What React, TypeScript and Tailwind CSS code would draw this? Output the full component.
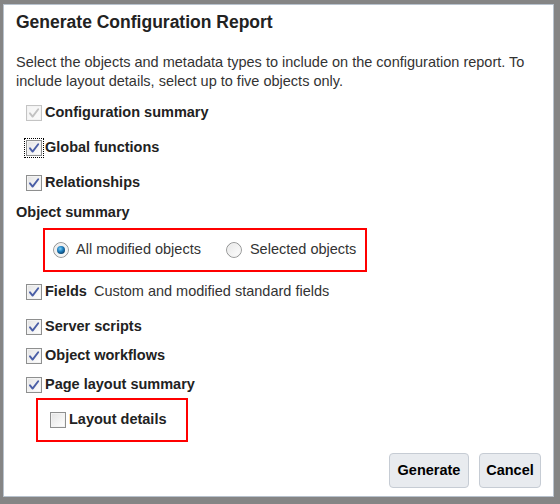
import React from 'react';

const font = { fontFamily: '"Liberation Sans", Arial, sans-serif' };

function Checkbox({ checked = true, disabled = false }: { checked?: boolean; disabled?: boolean }) {
  const border = disabled ? '#c4c4c4' : '#8e8f8f';
  const tick = disabled ? '#c2c2c2' : '#4a5ea6';
  return (
    <svg width="16" height="16" viewBox="0 0 16 16" className="shrink-0">
      <defs>
        <linearGradient id={disabled ? 'cbd' : 'cb'} x1="0" y1="0" x2="1" y2="1">
          <stop offset="0" stopColor={disabled ? '#f4f4f4' : '#e4e4e4'} />
          <stop offset="1" stopColor={disabled ? '#fafafa' : '#ffffff'} />
        </linearGradient>
      </defs>
      <rect x="0.5" y="0.5" width="15" height="15" fill="#fff" stroke={border} />
      <rect x="1.5" y="1.5" width="13" height="13" fill={`url(#${disabled ? 'cbd' : 'cb'})`} stroke="#f3f3f3" />
      {checked && (
        <path d="M4 8.3 L6.6 11.6 L12.2 4.2" fill="none" stroke={tick} strokeWidth="1.9" strokeLinecap="round" strokeLinejoin="round" />
      )}
    </svg>
  );
}

function Radio({ checked = false }: { checked?: boolean }) {
  return (
    <svg width="16" height="16" viewBox="0 0 16 16" className="shrink-0">
      <defs>
        <linearGradient id="rb" x1="0" y1="0" x2="1" y2="1">
          <stop offset="0" stopColor="#e6e6e6" />
          <stop offset="1" stopColor="#ffffff" />
        </linearGradient>
        <radialGradient id="rdot" cx="0.4" cy="0.35" r="0.7">
          <stop offset="0" stopColor="#7fd0f4" />
          <stop offset="0.5" stopColor="#1f7fc0" />
          <stop offset="1" stopColor="#0b3e66" />
        </radialGradient>
      </defs>
      <circle cx="8" cy="8" r="7.4" fill="url(#rb)" stroke="#8f9090" />
      <circle cx="8" cy="8" r="6.3" fill="none" stroke="#f2f2f2" />
      {checked && <circle cx="8" cy="8" r="4" fill="url(#rdot)" />}
    </svg>
  );
}

function CheckRow({ label, className = '', disabled = false, focus = false, children }: { label: string; className?: string; disabled?: boolean; focus?: boolean; children?: React.ReactNode }) {
  return (
    <div className={`flex h-[24px] items-center pl-[22px] ${className}`}>
      <span className={`flex h-[18px] w-[18px] items-center justify-center -ml-px ${focus ? 'outline-1 outline-dotted outline-black' : ''}`}>
        <Checkbox disabled={disabled} />
      </span>
      <span className="ml-[2px] text-[14.5px] font-bold text-[#222]">{label}</span>
      {children}
    </div>
  );
}

export default function App() {
  return (
    <div className="h-[504px] w-[560px] bg-[#858585] pl-[3px] pt-[4px]" style={font}>
      <div className="flex h-[493px] w-[551px] flex-col border border-[#b8c2cd] bg-white">
        <div className="flex h-[35px] items-center pl-[12px] text-[17.5px] font-bold text-[#222]">
          Generate Configuration Report
        </div>
        <p className="mt-[13px] pl-[12px] pr-[14px] text-[14.5px] leading-[19px] text-[#333]">
          Select the objects and metadata types to include on the configuration report. To include layout details, select up to five objects only.
        </p>
        <CheckRow label="Configuration summary" disabled className="mt-[10px]" />
        <CheckRow label="Global functions" focus className="mt-[11px]" />
        <CheckRow label="Relationships" className="mt-[11px]" />
        <div className="mt-[6px] flex h-[24px] items-center pl-[12px] text-[14.5px] font-bold text-[#222]">
          Object summary
        </div>
        <div className="ml-[39px] mt-[3px] flex h-[44px] w-[324px] items-center border-2 border-[#ff0000] pl-[8px] text-[14.5px] text-[#333]">
          <Radio checked />
          <span className="ml-[7px]">All modified objects</span>
          <span className="ml-[25px]"><Radio /></span>
          <span className="ml-[8px]">Selected objects</span>
        </div>
        <CheckRow label="Fields" className="mt-[8px]">
          <span className="ml-[7px] text-[14.5px] text-[#333]">Custom and modified standard fields</span>
        </CheckRow>
        <CheckRow label="Server scripts" className="mt-[11px]" />
        <CheckRow label="Object workflows" className="mt-[5px]" />
        <CheckRow label="Page layout summary" className="mt-[5px]" />
        <div className="ml-[32px] mt-[1px] flex h-[44px] w-[152px] items-center border-2 border-[#ff0000] pl-[12px]">
          <Checkbox checked={false} />
          <span className="ml-[3px] text-[14.5px] font-bold text-[#222]">Layout details</span>
        </div>
        <div className="mt-[11px] flex justify-end gap-[10px] pr-[12px]">
          <button className="h-[35px] w-[80px] rounded-[4px] border border-[#c6ccd4] bg-[#e8ebef] text-[14.5px] font-bold text-black">
            Generate
          </button>
          <button className="h-[35px] w-[62px] rounded-[4px] border border-[#c6ccd4] bg-[#e8ebef] text-[14.5px] font-bold text-black">
            Cancel
          </button>
        </div>
      </div>
    </div>
  );
}
